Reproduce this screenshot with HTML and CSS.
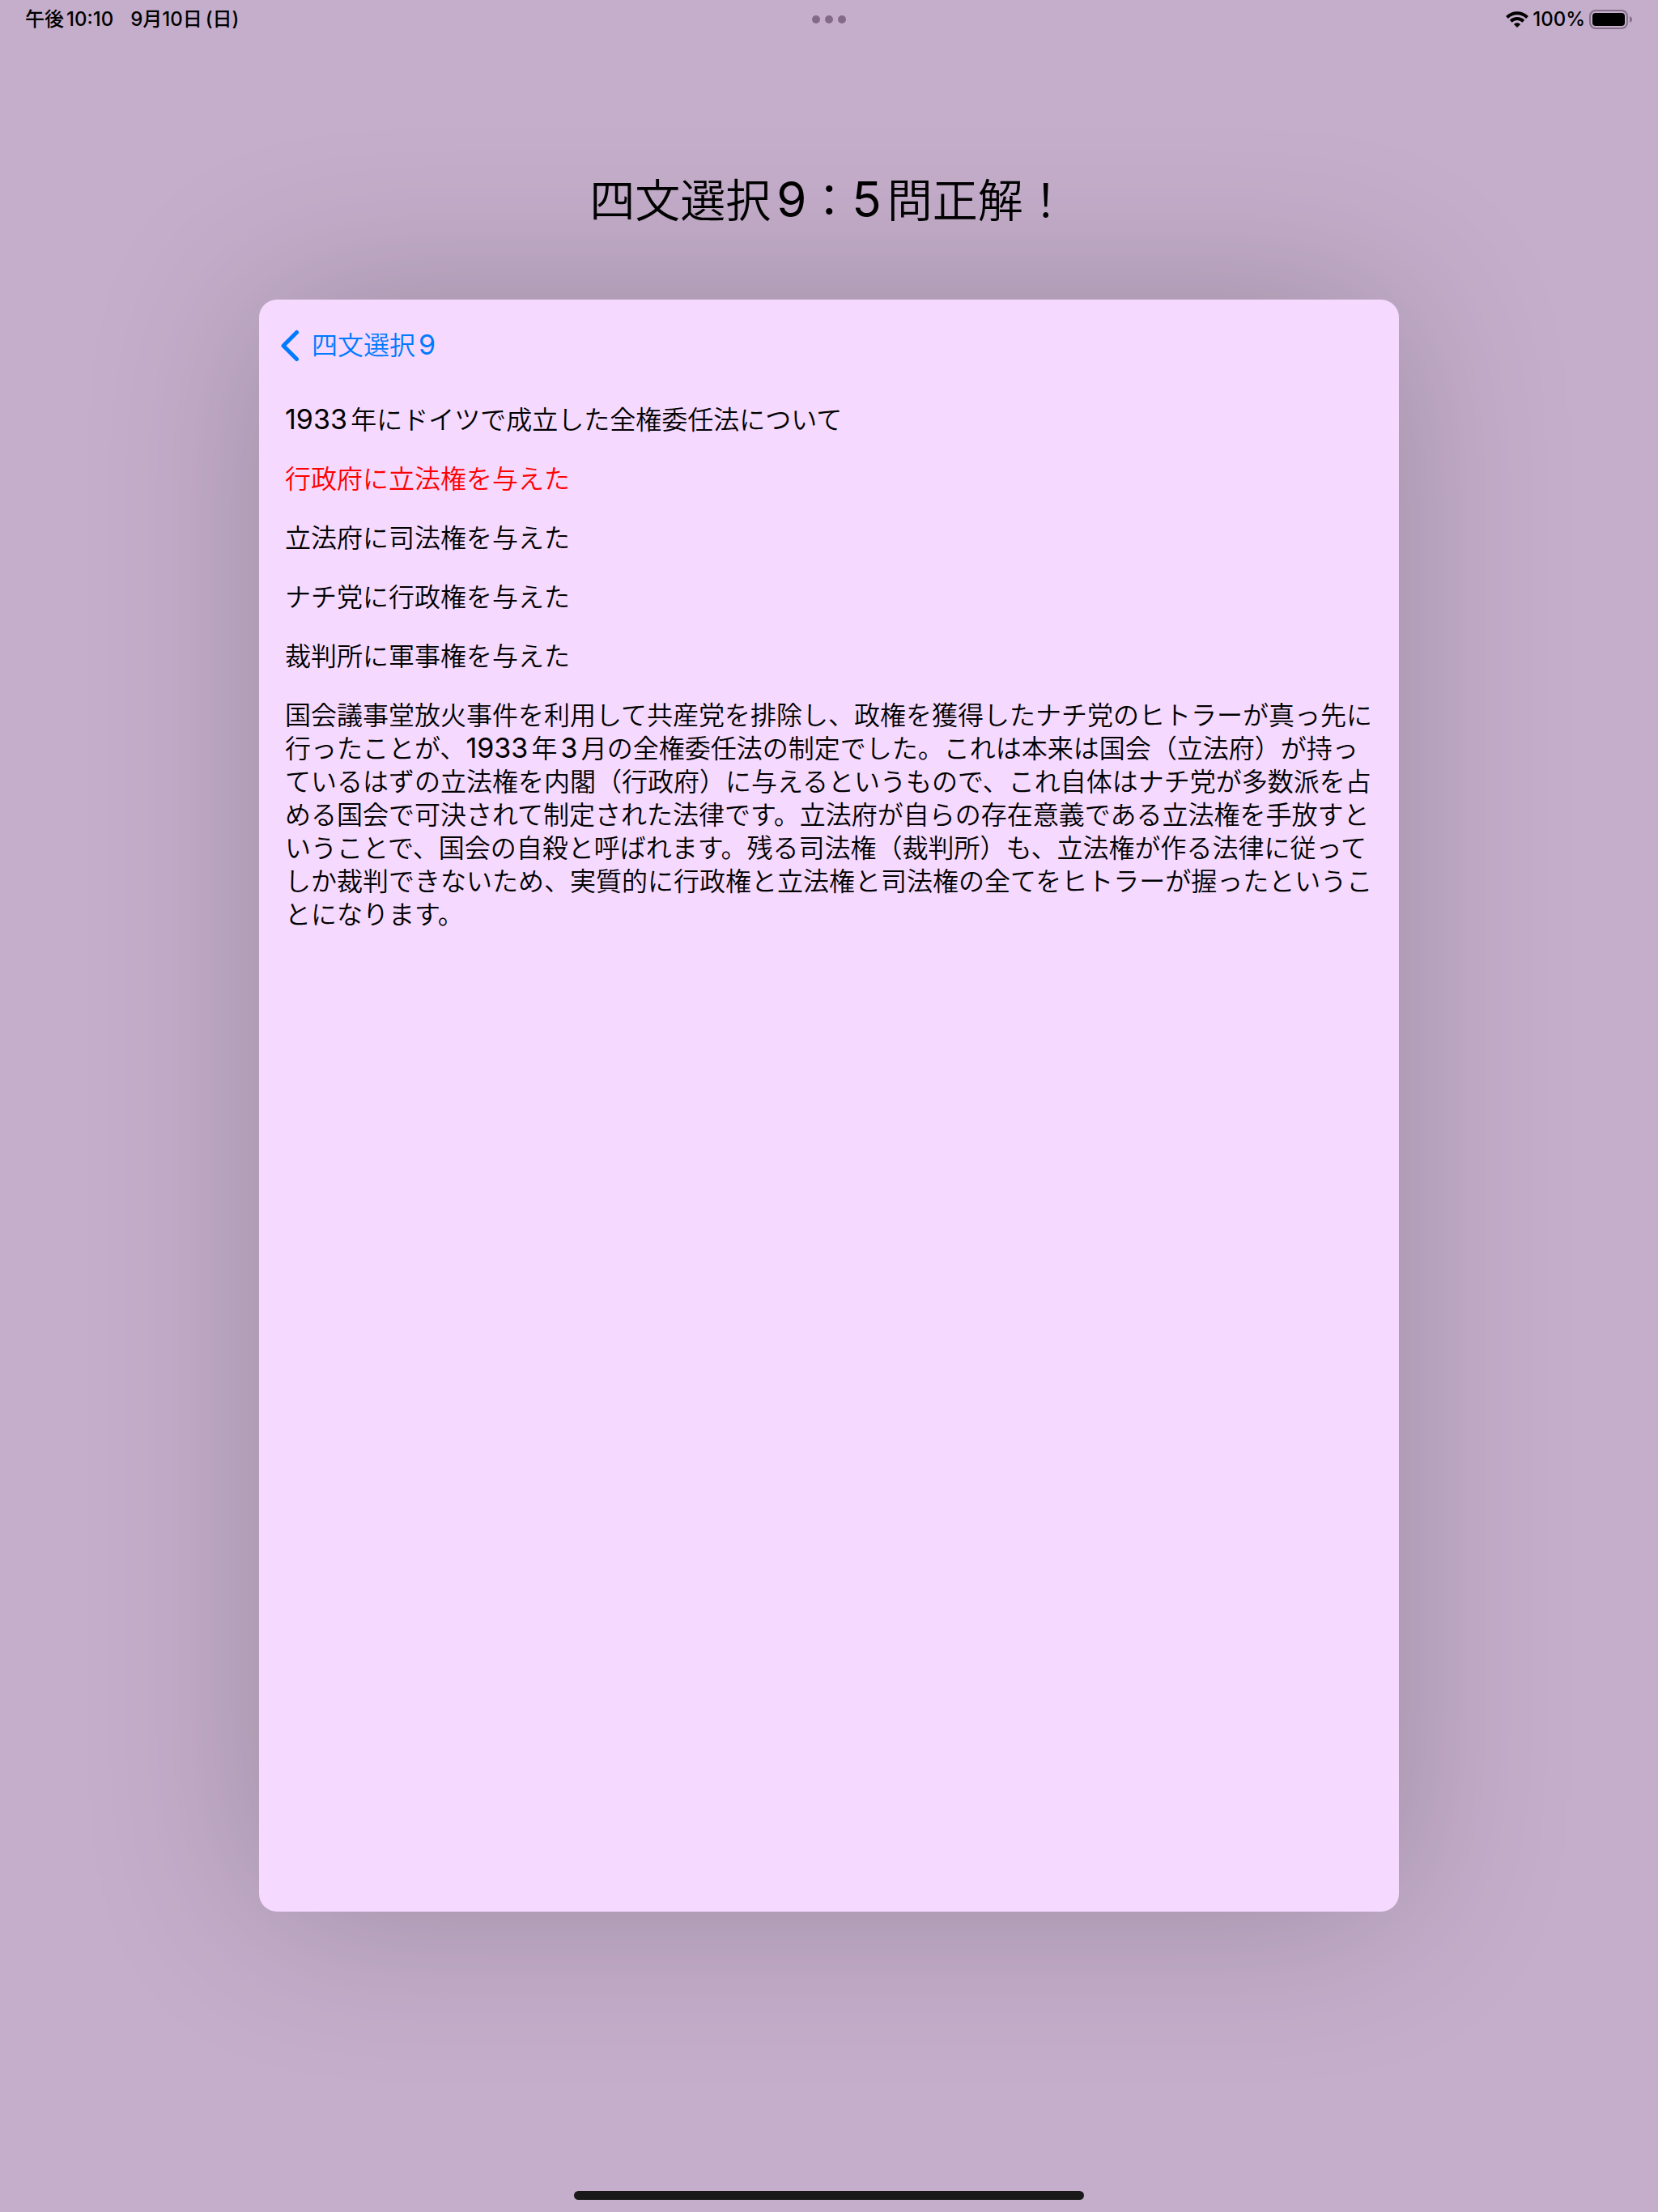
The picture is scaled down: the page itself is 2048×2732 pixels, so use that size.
FILE: index.html
```html
<!DOCTYPE html>
<html lang="ja">
<head>
    <meta charset="UTF-8">
    <meta name="viewport" content="width=device-width, initial-scale=1.0">
    <title>四文選択9</title>
    <link rel="stylesheet" href="styles.css">
</head>
<body>
    <div class="status-bar">
        <div class="status-left">
            <span class="time">午後10:10</span>
            <span>9月10日<span class="weekday">(日)</span></span>
        </div>
        <div class="status-dots">
            <span></span>
            <span></span>
            <span></span>
        </div>
        <div class="status-right">
            <svg class="wifi" viewBox="0 0 28 20" aria-hidden="true">
                <path d="M1.5 7.5C8.5 .5 19.5 .5 26.5 7.5" />
                <path d="M6.2 12.2C10.6 8 17.4 8 21.8 12.2" />
                <path class="wifi-dot" d="M14 20L9.9 15.9C12.2 13.8 15.8 13.8 18.1 15.9Z" />
            </svg>
            <span>100%</span>
            <svg class="battery" viewBox="0 0 54 24" aria-hidden="true">
                <rect class="battery-case" x="1" y="1" width="46" height="22" rx="7" />
                <rect x="4" y="4" width="40" height="16" rx="4" />
                <path class="battery-tip" d="M50 8C54 9.5 54 14.5 50 16Z" />
            </svg>
        </div>
    </div>

    <h1>四文選択<span class="num">9</span>：<span class="num">5</span>問正解！</h1>

    <main class="card">
        <button type="button" class="back-btn">
            <svg class="chevron" viewBox="0 0 24 40" aria-hidden="true">
                <path d="M20.5 3.5L4 20L20.5 36.5" />
            </svg>
            <span>四文選択<span class="num">9</span></span>
        </button>

        <div class="content">
            <h2><span class="num">1933</span>年にドイツで成立した全権委任法について</h2>
            <ul class="choices">
                <li class="correct">行政府に立法権を与えた</li>
                <li>立法府に司法権を与えた</li>
                <li>ナチ党に行政権を与えた</li>
                <li>裁判所に軍事権を与えた</li>
            </ul>
            <p>国会議事堂放火事件を利用して共産党を排除し、政権を獲得したナチ党のヒトラーが真っ先に行ったことが、<span class="num">1933</span>年<span class="num">3</span>月の全権委任法の制定でした。これは本来は国会（立法府）が持っているはずの立法権を内閣（行政府）に与えるというもので、これ自体はナチ党が多数派を占める国会で可決されて制定された法律です。立法府が自らの存在意義である立法権を手放すということで、国会の自殺と呼ばれます。残る司法権（裁判所）も、立法権が作る法律に従ってしか裁判できないため、実質的に行政権と立法権と司法権の全てをヒトラーが握ったということになります。</p>
        </div>
    </main>

    <div class="home-bar"></div>
</body>
</html>
```
FILE: styles.css
```css
* {
    box-sizing: border-box;
}

body {
    font-family: Inter, "Noto Sans CJK JP", sans-serif;
    font-size: 32px;
    font-weight: 350;
    line-height: 41px;
    text-autospace: normal;
    margin: 0;
    min-height: 100vh;
    display: flex;
    flex-direction: column;
    align-items: center;
    background-color: #c5aecb;
    color: #000;
    overflow-x: hidden;
}

.num {
    font-size: 34px;
    font-weight: 400;
    line-height: 1;
}

.status-bar {
    width: 100%;
    height: 48px;
    padding: 0 31px;
    display: grid;
    grid-template-columns: 1fr auto 1fr;
    align-items: center;
    font-size: 24px;
    font-weight: 500;
    line-height: 24px;
    text-autospace: no-autospace;
}

.status-left {
    display: flex;
    gap: 21px;
}

.time {
    text-autospace: normal;
}

.weekday {
    margin-left: 4px;
}

.status-dots {
    display: flex;
    gap: 6px;
}

.status-dots span {
    width: 10px;
    height: 10px;
    border-radius: 50%;
    background: #836a8a;
}

.status-right {
    display: flex;
    align-items: center;
    justify-content: flex-end;
    gap: 5px;
}

.wifi {
    width: 28px;
    height: 20px;
    fill: none;
    stroke: #000;
    stroke-width: 4;
}

.wifi-dot {
    fill: #000;
    stroke: none;
}

.battery {
    width: 54px;
    height: 24px;
}

.battery-case {
    fill: none;
    stroke: #836f88;
    stroke-width: 2;
}

.battery-tip {
    fill: #836f88;
}

h1 {
    margin: 164px 0 86px;
    font-size: 56px;
    font-weight: 350;
    line-height: 72px;
}

h1 .num {
    font-size: 60px;
}

.card {
    flex: 1;
    width: 68.75%;
    padding: 32px;
    border-radius: 22px;
    background: #f5d9ff;
    box-shadow: 0 0 220px rgba(0, 0, 0, 0.2);
}

.back-btn {
    display: flex;
    align-items: center;
    gap: 15px;
    margin-left: -6px;
    padding: 4px 0;
    border: none;
    background: none;
    color: #007aff;
    font: inherit;
    cursor: pointer;
}

.chevron {
    width: 24px;
    height: 40px;
    fill: none;
    stroke: currentColor;
    stroke-width: 5;
    stroke-linecap: round;
    stroke-linejoin: round;
}

.content {
    display: flex;
    flex-direction: column;
    gap: 32px;
    margin-top: 47px;
}

h2 {
    margin: 0;
    font-size: 32px;
    font-weight: 350;
}

.choices {
    display: flex;
    flex-direction: column;
    gap: 32px;
    margin: 0;
    padding: 0;
    list-style: none;
}

.correct {
    color: #ff0000;
}

p {
    margin: 0;
}

.home-bar {
    width: 630px;
    max-width: 60%;
    height: 11px;
    margin: 345px 0 15px;
    border-radius: 6px;
    background: #191919;
}
```
